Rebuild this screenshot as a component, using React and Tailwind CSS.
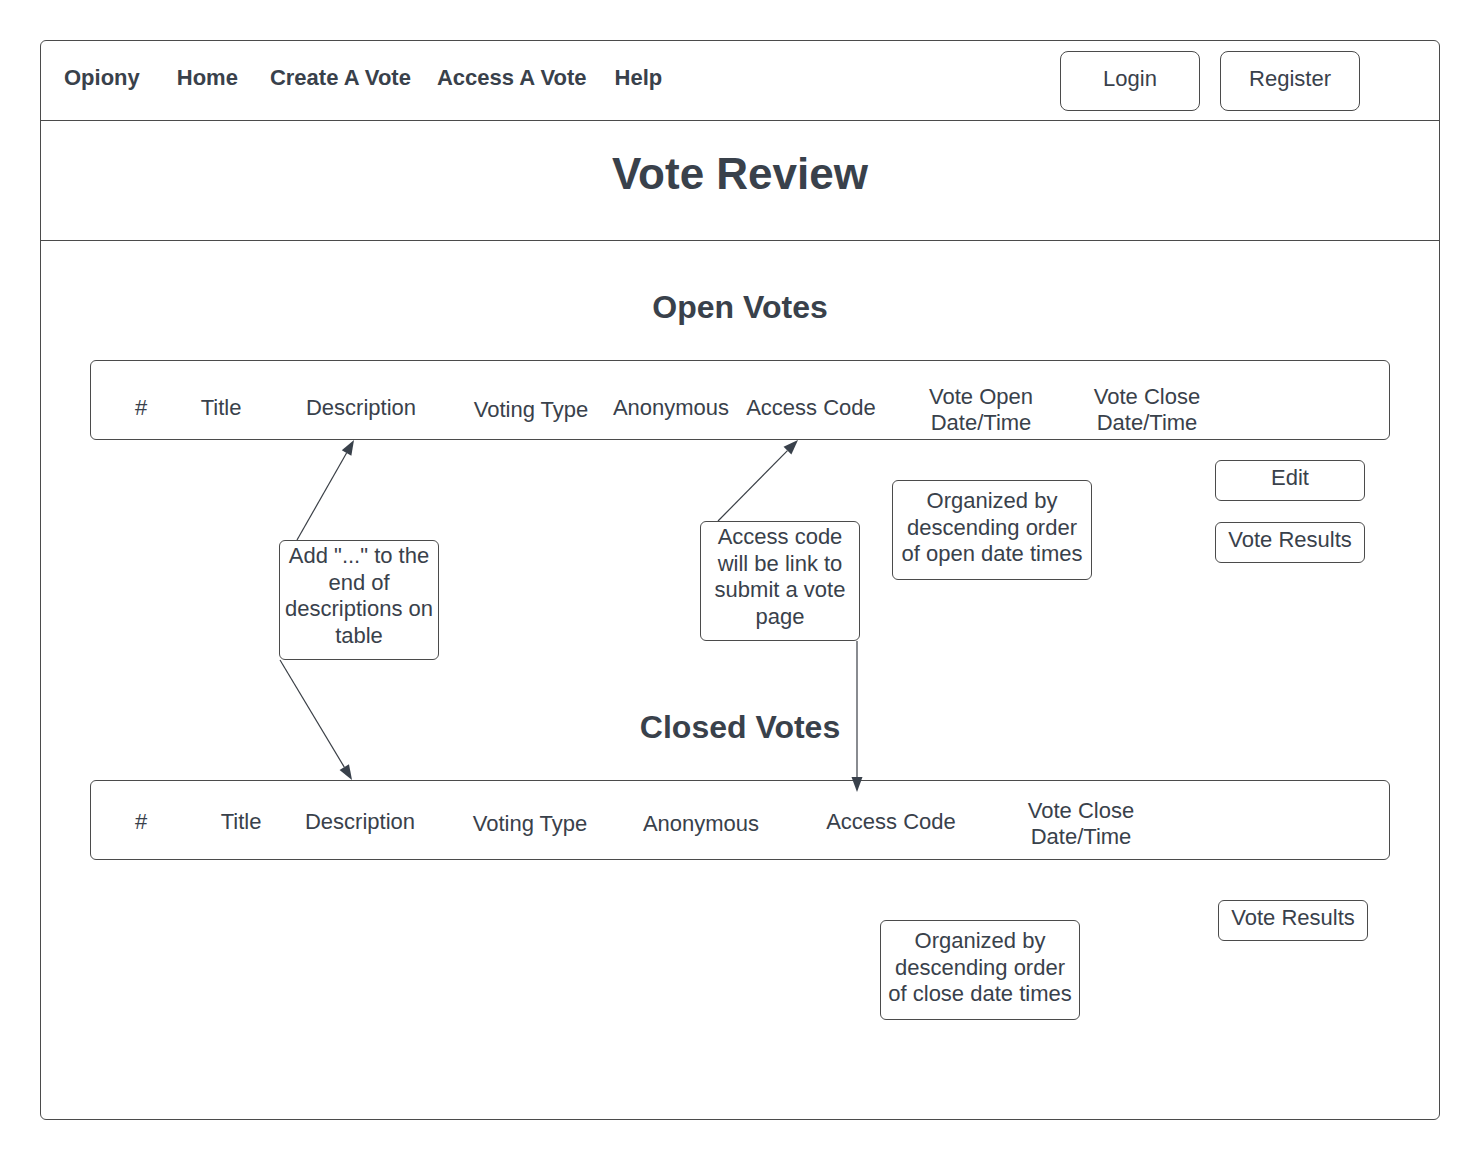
import React from 'react';

const ink = '#39414b';

// filled arrowhead line between two points (frame coordinates)
const Arrow = ({ x1, y1, x2, y2 }) => {
  const a = Math.atan2(y2 - y1, x2 - x1);
  const len = 15;
  const half = 5.5;
  const bx = x2 - len * Math.cos(a);
  const by = y2 - len * Math.sin(a);
  const px = -Math.sin(a) * half;
  const py = Math.cos(a) * half;
  return (
    <g>
      <line x1={x1} y1={y1} x2={bx} y2={by} stroke="#3a3f46" strokeWidth="1.2" />
      <polygon points={`${x2},${y2} ${bx + px},${by + py} ${bx - px},${by - py}`} fill={ink} />
    </g>
  );
};

const Note = ({ className, lines }) => (
  <div className={`absolute rounded-md border border-[#4b4b4b] bg-white text-center text-[22px] leading-[26.5px] ${className}`}>
    {lines.map((l) => (
      <div key={l} className="whitespace-nowrap">{l}</div>
    ))}
  </div>
);

const HeaderCell = ({ children, className = '' }) => (
  <div className={`flex flex-col items-center justify-center whitespace-nowrap text-center leading-[26px] ${className}`}>
    {children}
  </div>
);

export default function App() {
  return (
    <div className="min-h-[1160px] bg-white p-10 font-['Liberation_Sans',Arial,sans-serif] text-[#39414b]">
      <div className="relative h-[1080px] w-[1400px] rounded-md border border-[#4b4b4b]">
        {/* Nav */}
        <nav className="flex h-[80px] items-center rounded-t-md border-b border-[#4b4b4b] pl-[23px] pr-[79px]">
          <div className="flex items-center pb-[6px] text-[22px] font-bold">
            <span>Opiony</span>
            <span className="ml-[37px]">Home</span>
            <span className="ml-[32px]">Create A Vote</span>
            <span className="ml-[26px]">Access A Vote</span>
            <span className="ml-[28px]">Help</span>
          </div>
          <div className="ml-auto flex gap-5 text-[22px]">
            <button className="h-[60px] w-[140px] rounded-lg border border-[#4b4b4b] pb-[4px]">Login</button>
            <button className="h-[60px] w-[140px] rounded-lg border border-[#4b4b4b] pb-[4px]">Register</button>
          </div>
        </nav>

        {/* Page title */}
        <header className="flex h-[120px] items-center justify-center border-b border-[#4b4b4b] pb-[14px]">
          <h1 className="text-[44px] font-bold">Vote Review</h1>
        </header>

        {/* Body */}
        <main className="px-[49px]">
          <h2 className="mt-[46px] text-center text-[32px] font-bold leading-[40px]">Open Votes</h2>
          <div className="mt-[33px] grid h-[80px] grid-cols-[100px_60px_220px_120px_160px_120px_220px_112px] rounded-md border border-[#4b4b4b] pt-4 text-[22px]">
            <HeaderCell>#</HeaderCell>
            <HeaderCell>Title</HeaderCell>
            <HeaderCell>Description</HeaderCell>
            <HeaderCell className="pt-[3px]">Voting Type</HeaderCell>
            <HeaderCell>Anonymous</HeaderCell>
            <HeaderCell>Access Code</HeaderCell>
            <HeaderCell className="pt-[3px]">
              <span>Vote Open</span>
              <span>Date/Time</span>
            </HeaderCell>
            <HeaderCell className="pt-[3px]">
              <span>Vote Close</span>
              <span>Date/Time</span>
            </HeaderCell>
          </div>
          <div className="mt-5 flex flex-col items-end gap-[21px] pr-[25px] text-[22px]">
            <button className="flex h-[41px] w-[150px] justify-center rounded-md border border-[#4b4b4b] pt-[4px] leading-[26px]">Edit</button>
            <button className="flex h-[41px] w-[150px] justify-center rounded-md border border-[#4b4b4b] pt-[4px] leading-[26px]">Vote Results</button>
          </div>

          <h2 className="mt-[144px] text-center text-[32px] font-bold leading-[40px]">Closed Votes</h2>
          <div className="mt-[33px] grid h-[80px] grid-cols-[100px_100px_138px_202px_140px_240px_140px] rounded-md border border-[#4b4b4b] pt-[4px] text-[22px]">
            <HeaderCell>#</HeaderCell>
            <HeaderCell>Title</HeaderCell>
            <HeaderCell>Description</HeaderCell>
            <HeaderCell className="pt-[3px]">Voting Type</HeaderCell>
            <HeaderCell className="pt-[3px]">Anonymous</HeaderCell>
            <HeaderCell>Access Code</HeaderCell>
            <HeaderCell className="pt-[3px]">
              <span>Vote Close</span>
              <span>Date/Time</span>
            </HeaderCell>
          </div>
          <div className="mt-10 flex justify-end pr-[22px] text-[22px]">
            <button className="flex h-[41px] w-[150px] justify-center rounded-md border border-[#4b4b4b] pt-[4px] leading-[26px]">Vote Results</button>
          </div>
        </main>

        {/* Annotation arrows */}
        <svg className="pointer-events-none absolute left-[-1px] top-[-1px]" width="1400" height="1080" viewBox="0 0 1400 1080">
          <Arrow x1={257} y1={500} x2={314} y2={400} />
          <Arrow x1={240} y1={620} x2={312} y2={740} />
          <Arrow x1={678} y1={481} x2={758} y2={400} />
          <Arrow x1={817} y1={601} x2={817} y2={752} />
        </svg>

        {/* Annotation notes */}
        <Note className="left-[238px] top-[499px] h-[120px] w-[160px] pt-[2px]" lines={['Add "..." to the', 'end of', 'descriptions on', 'table']} />
        <Note className="left-[659px] top-[480px] h-[120px] w-[160px] pt-[2px]" lines={['Access code', 'will be link to', 'submit a vote', 'page']} />
        <Note className="left-[851px] top-[439px] h-[100px] w-[200px] pt-[7px]" lines={['Organized by', 'descending order', 'of open date times']} />
        <Note className="left-[839px] top-[879px] h-[100px] w-[200px] pt-[7px]" lines={['Organized by', 'descending order', 'of close date times']} />
      </div>
    </div>
  );
}
